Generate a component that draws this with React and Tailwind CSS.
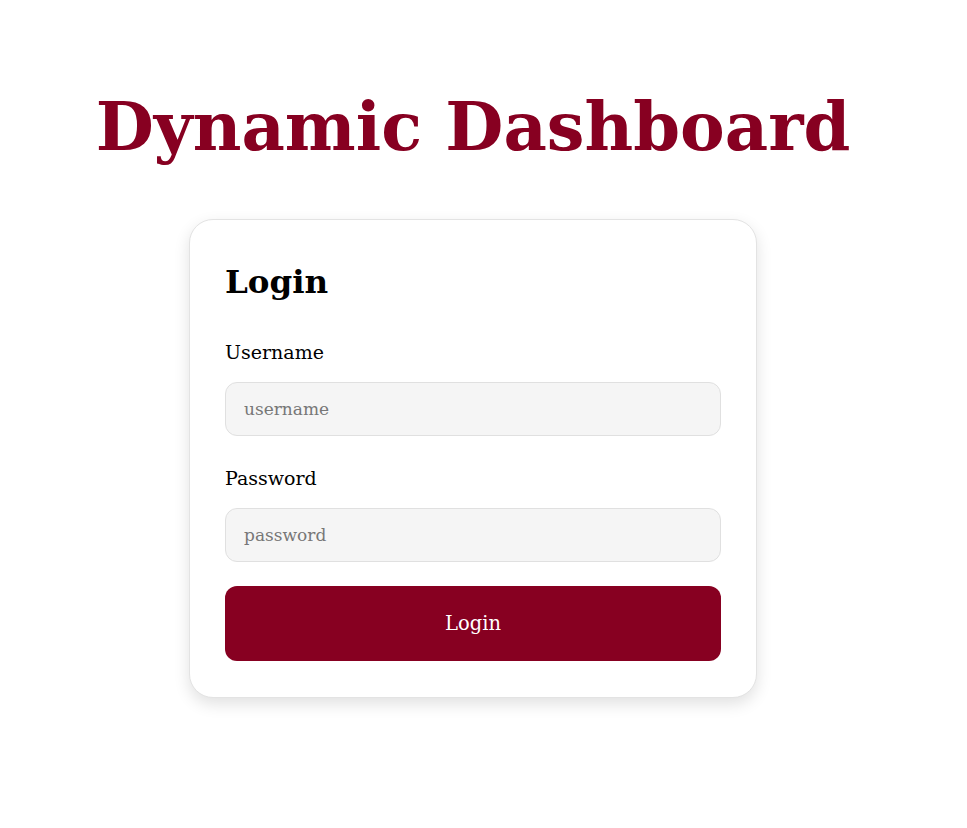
export default function App() {
  return (
    <div className="min-h-screen w-[946px] bg-white flex flex-col items-center text-black [font-family:'DejaVu_Serif',serif]">
      <h1 className="mt-[72px] text-[67px] leading-[110px] font-bold text-[#870021]">
        Dynamic Dashboard
      </h1>
      <div className="mt-[37px] w-[568px] rounded-[24px] border border-[#e3e3e3] bg-white px-[35px] pt-[36px] pb-[36px] shadow-[0_6px_16px_rgba(0,0,0,0.12)]">
        <h2 className="text-[32.5px] leading-[52px] font-bold">Login</h2>
        <form className="mt-[30px] flex flex-col">
          <label className="text-[19px] leading-[28px]">Username</label>
          <input
            type="text"
            placeholder="username"
            className="mt-[16px] h-[54px] rounded-[12px] border border-[#e0e0e0] bg-[#f5f5f5] px-[18px] text-[17px] placeholder:text-[#777] outline-none"
          />
          <label className="mt-[28px] text-[19px] leading-[28px]">Password</label>
          <input
            type="password"
            placeholder="password"
            className="mt-[16px] h-[54px] rounded-[12px] border border-[#e0e0e0] bg-[#f5f5f5] px-[18px] text-[17px] placeholder:text-[#777] outline-none"
          />
          <button
            type="button"
            className="mt-[24px] h-[75px] rounded-[12px] bg-[#870021] text-[19.5px] text-white"
          >
            Login
          </button>
        </form>
      </div>
    </div>
  );
}
